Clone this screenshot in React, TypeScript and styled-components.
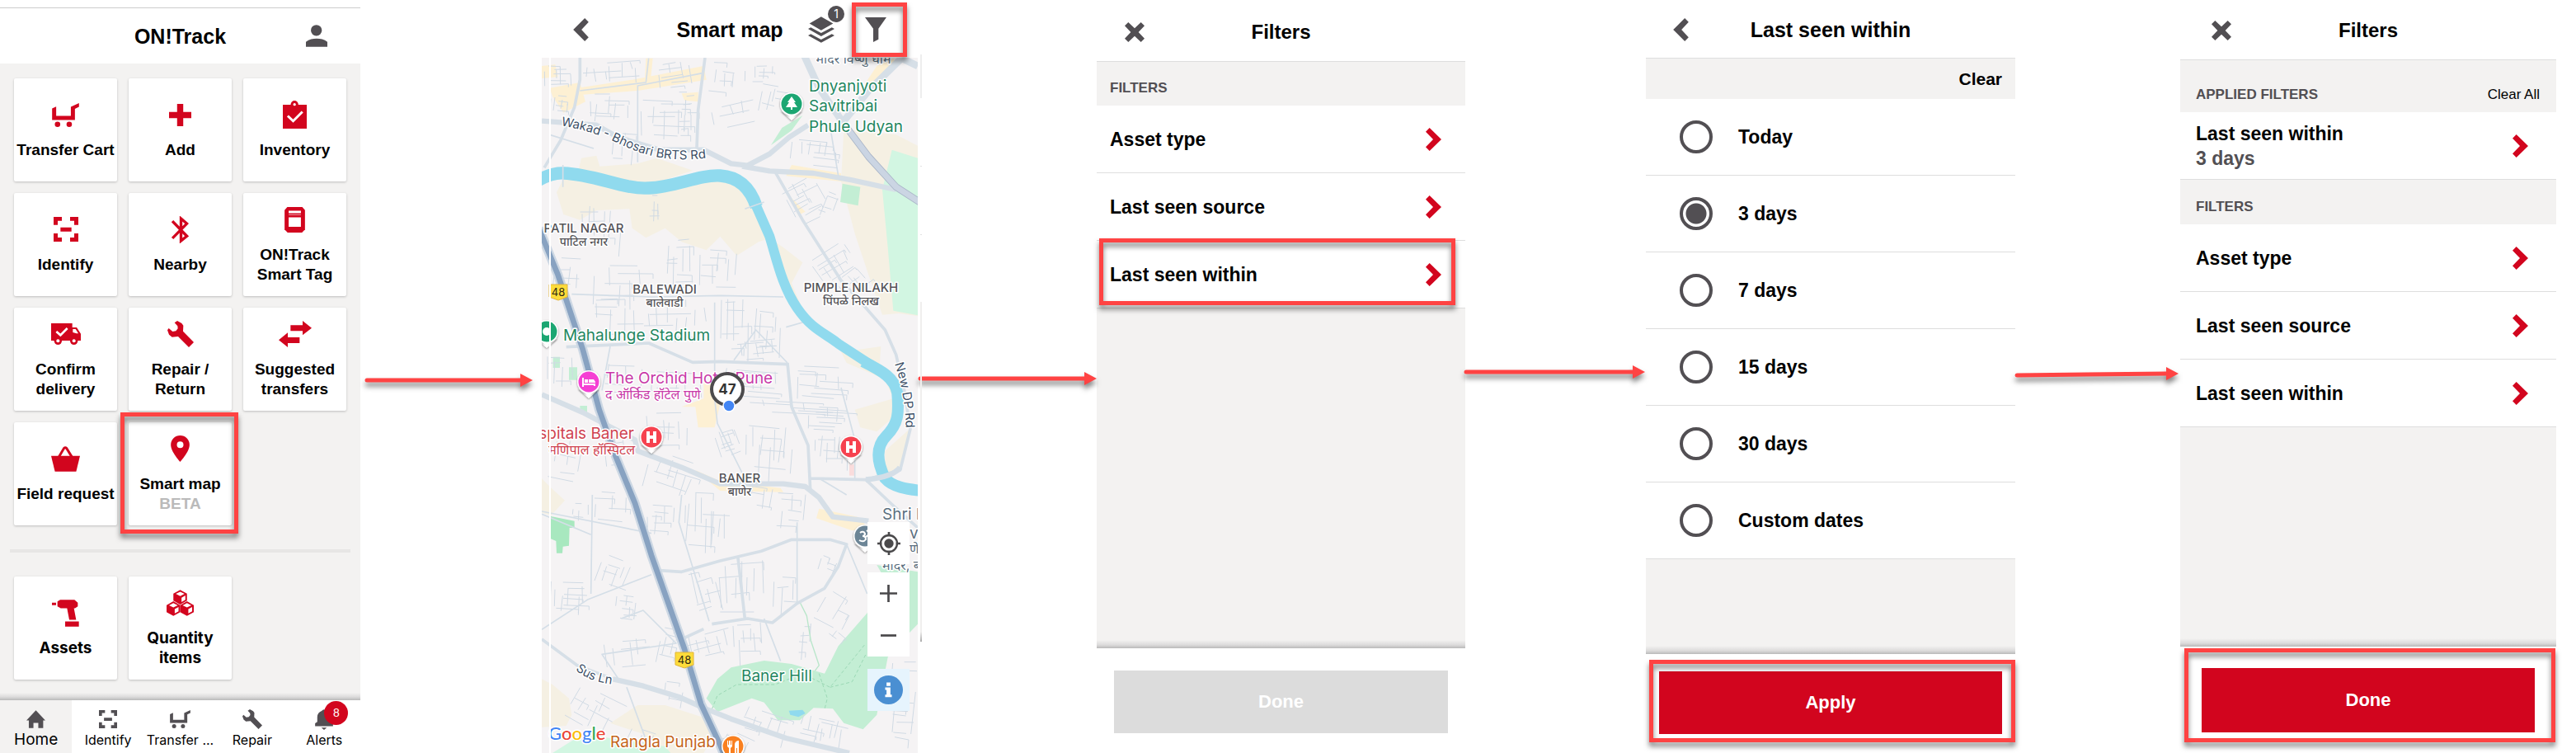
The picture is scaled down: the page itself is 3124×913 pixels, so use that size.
import React from "react";
import styled, { createGlobalStyle } from "styled-components";

const RED = "#d2051e";
const STEEL = "#524f53";
const SAND = "#f3f2f1";
const LINE = "#dedede";
const MARK = "#ff4343";
const UI = '"Liberation Sans", Arial, sans-serif';
const SYSTEM = 'Inter, "Noto Sans", sans-serif';

const GlobalStyle = createGlobalStyle`
  *, *::before, *::after { box-sizing: border-box; }
  body { margin: 0; background: #fff; color: #000; font-family: ${UI}; }
  h2, h3, p, ul, fieldset { margin: 0; padding: 0; border: 0; min-width: 0; }
  button { border: 0; padding: 0; background: none; color: inherit; font: inherit; cursor: pointer; }
  svg { display: block; }
`;

/* ---------- page frame ---------- */

const Flow = styled.main`
  display: grid;
  grid-template-columns:
    minmax(0, 437fr) minmax(0, 220fr) minmax(0, 456fr) minmax(0, 217fr) minmax(0, 447fr)
    minmax(0, 219fr) minmax(0, 448fr) minmax(0, 200fr) minmax(0, 456fr) minmax(0, 24fr);
  min-height: 100vh;
`;

const Screen = styled.section`
  display: flex;
  flex-direction: column;
  min-width: 0;
`;

const Header = styled.header<{ $height: number; $line?: string; $top?: number }>`
  display: grid;
  grid-template-columns: 1fr auto 1fr;
  align-items: center;
  height: ${(p) => p.$height}px;
  padding-top: ${(p) => p.$top ?? 2}px;
  border-bottom: ${(p) => (p.$line ? `1px solid ${p.$line}` : "0")};
`;

const Title = styled.h2<{ $size?: number }>`
  grid-column: 2;
  font-size: ${(p) => p.$size ?? 25}px;
  line-height: 30px;
  font-weight: 700;
`;

const HeaderStart = styled.div<{ $pad: number }>`
  padding-left: ${(p) => p.$pad}px;
  display: flex;
`;

const HeaderEnd = styled.div<{ $pad: number; $gap?: number }>`
  grid-column: 3;
  padding-right: ${(p) => p.$pad}px;
  display: flex;
  align-items: center;
  justify-content: flex-end;
  gap: ${(p) => p.$gap ?? 0}px;
`;

const IconButton = styled.button`
  position: relative;
  display: flex;
  color: ${STEEL};
`;

const Highlight = styled.span<{ $inset: string }>`
  position: absolute;
  inset: ${(p) => p.$inset};
  border: 5px solid ${MARK};
  filter: drop-shadow(0 5px 3px rgba(0, 0, 0, 0.5));
  pointer-events: none;
  z-index: 2;
`;

const Filler = styled.div`
  flex: 1;
  background: linear-gradient(to top, #b9b9b9, #dcdbdb 4px, ${SAND} 10px) ${SAND};
`;

const Footer = styled.footer<{ $pad: string }>`
  display: flex;
  padding: ${(p) => p.$pad};
`;

const ActionButton = styled.button<{ $height?: number }>`
  position: relative;
  flex: 1;
  height: ${(p) => p.$height ?? 76}px;
  background: ${RED};
  color: #fff;
  font-size: 22px;
  line-height: 26px;
  font-weight: 700;
  &:disabled { background: #dcdcdc; color: #fff; cursor: default; }
`;

/* ---------- arrows between screens ---------- */

const Gutter = styled.div<{ $top: number; $sliver?: boolean }>`
  position: relative;
  z-index: 3;
  padding-top: ${(p) => p.$top}px;
  &::after {
    content: "";
    display: ${(p) => (p.$sliver ? "block" : "none")};
    position: absolute;
    left: 3px;
    top: 66px;
    width: 2px;
    height: 712px;
    background: linear-gradient(#eee 53px, #fff 53px, #fff 135px, #e2e2e2 135px, #e2e2e2 136px,
      #fff 136px, #fff 218px, #e2e2e2 218px, #e2e2e2 219px, #fff 219px, #fff 300px, #f0efee 300px,
      #f0efee 700px, #aaa 712px);
  }
`;

const ArrowSvg = styled.svg`
  width: 100%;
  overflow: visible;
  filter: drop-shadow(0 5px 3px rgba(0, 0, 0, 0.5));
`;

function Arrow({ width, from, to, drop = 0 }: { width: number; from: number; to: number; drop?: number }) {
  return (
    <ArrowSvg viewBox={`0 0 ${width} 16`} aria-hidden="true">
      <line x1={from + 3} y1={8 + drop} x2={to - 13} y2={8} stroke={MARK} strokeWidth={5} strokeLinecap="round" />
      <path d={`M${to - 15} 0L${to} 8L${to - 15} 16z`} fill={MARK} />
    </ArrowSvg>
  );
}

/* ---------- icons ---------- */

type IconProps = { scale?: number };

function glyph(w: number, h: number, body: React.ReactNode) {
  return function Glyph({ scale = 1 }: IconProps) {
    return (
      <svg
        viewBox={`0 0 ${w} ${h}`}
        width={Math.round((w / 3) * scale)}
        height={Math.round((h / 3) * scale)}
        fill="currentColor"
        aria-hidden="true"
      >
        {body}
      </svg>
    );
  };
}

const CartIcon = glyph(99, 88, <>
  <path d="M0 20L15 13V47H69V14L99 0V14L84 21V62H0z" />
  <circle cx="20" cy="78" r="10" /><circle cx="63" cy="78" r="10" />
</>);
const PlusIcon = glyph(80, 80, <path d="M29 0H51V29H80V51H51V80H29V51H0V29H29z" />);
const InventoryIcon = glyph(88, 103, <>
  <path d="M0 15H88V103H0z" /><circle cx="43" cy="14" r="14" />
  <circle cx="43" cy="14" r="5" fill="#fff" />
  <path d="M18 56L38 75L72 41" fill="none" stroke="#fff" strokeWidth="9" />
</>);
const ScanIcon = glyph(90, 90, <path d="M0 0H30V14H15V29H0zM60 0H90V29H75V14H60zM0 60H15V75H30V90H0zM75 60H90V90H60V75H75zM25 38H65V53H25z" />);
const BluetoothIcon = glyph(62, 98, <path d="M3 18L55 72L34 89V9L55 27L3 80" fill="none" stroke="currentColor" strokeWidth="10" />);
const TagIcon = glyph(75, 94, <>
  <path d="M10 0H65L75 11V83L64 94H11L0 83V11z" />
  <path d="M15 14H60V23H15zM15 38H60V73H15z" fill="#fff" />
  <path d="M15 27H60V30H15z" fill="#f0a0a8" />
</>);
const TruckIcon = glyph(108, 78, <>
  <path d="M0 0H77V15H93L108 38V63H0z" />
  <circle cx="25" cy="64" r="14" /><circle cx="83" cy="64" r="14" />
  <circle cx="25" cy="64" r="6" fill="#fff" /><circle cx="83" cy="64" r="6" fill="#fff" />
  <path d="M79 21H89L99 37H92L79 33z" fill="#fff" />
  <path d="M19 30L34 43L59 18" fill="none" stroke="#fff" strokeWidth="8" />
</>);
const WrenchIcon = glyph(96, 96, <path d="M26 7L36 0L52 9L58 17L57 38L96 78L78 96L39 57L17 59L6 50L0 34L5 27L19 39L31 37L38 28L37 19z" />);
const SwapIcon = glyph(120, 96, <path d="M43 16H87V0L120 26L87 52V37H43zM76 60H33V43L0 70L33 96V81H76z" />);
const BasketIcon = glyph(106, 92, <>
  <path d="M0 35H106L92 92H14z" />
  <path d="M29 38L47 7Q52 2 57 7L76 38" fill="none" stroke="currentColor" strokeWidth="9" />
</>);
const PinIcon = glyph(68, 96, <path fillRule="evenodd" d="M34 0A34 34 0 0 1 68 34C68 60 34 96 34 96S0 60 0 34A34 34 0 0 1 34 0zM34 22A12 12 0 1 0 34 46A12 12 0 1 0 34 22z" />);
const DrillIcon = glyph(99, 98, <path d="M0 11H15V20H0zM20 6L30 0H82L94 11V24L84 31H80L88 73H63L55 31H32L20 24zM48 79H98V98H48z" />);
const Cube = ({ x, y }: { x: number; y: number }) => (
  <g transform={`translate(${x} ${y})`}>
    <path d="M25 0L50 14V40L25 54L0 40V14z" />
    <path d="M25 7L41 15L25 23L9 15zM30 29L44 21V37L30 45z" fill="#fff" />
  </g>
);
const CubesIcon = glyph(100, 96, <><Cube x={25} y={0} /><Cube x={0} y={42} /><Cube x={50} y={42} /></>);
const PersonIcon = glyph(78, 80, <>
  <circle cx="38" cy="20" r="20" />
  <path d="M0 80V62C12 52 25 50 39 50S66 52 78 62V80z" />
</>);
const HomeIcon = glyph(70, 65, <path d="M35 0L70 37H62V65H44V46H26V65H9V37H0z" />);
const BellIcon = glyph(66, 76, <path d="M0 62V52L8 46V28A25 25 0 0 1 24 6Q33 -4 42 6A25 25 0 0 1 58 28V46L66 52V62zM23 68H43L33 76z" />);
const BackIcon = glyph(56, 84, <path d="M42 0L56 14L30 42L56 70L42 84L0 42z" />);
const NextIcon = glyph(57, 84, <path d="M14 0L57 42L14 84L0 70L27 42L0 14z" />);
const CloseIcon = glyph(72, 72, <path d="M13 0L36 22L59 0L72 13L50 36L72 59L59 72L36 50L13 72L0 59L22 36L0 13z" />);
const LayersIcon = glyph(97, 96, <path d="M48 0L92 25L48 50L5 25zM0 45L10 40L48 60L87 40L97 45L48 72zM0 69L10 64L48 84L87 64L97 69L48 96z" />);
const FunnelIcon = glyph(78, 90, <path d="M0 0H78L49 41V80L30 90V41z" />);
const TargetIcon = glyph(84, 84, <>
  <circle cx="42" cy="42" r="30" fill="none" stroke="currentColor" strokeWidth="7" />
  <circle cx="42" cy="42" r="17" />
  <path d="M38 0H46V16H38zM38 68H46V84H38zM0 38H16V46H0zM68 38H84V46H68z" />
</>);
const ZoomInIcon = glyph(62, 62, <path d="M27 0H35V27H62V35H35V62H27V35H0V27H27z" />);
const ZoomOutIcon = glyph(56, 62, <path d="M0 27H56V35H0z" />);
const InfoIcon = glyph(104, 104, <>
  <circle cx="52" cy="52" r="52" />
  <path d="M45 25H59V38H45zM40 43H59V69H64V78H40V69H45V52H40z" fill="#fff" />
</>);

/* ---------- screen 1: home ---------- */

const HomeScreen = styled(Screen)`
  padding-top: 9px;
`;

const HomeHeader = styled(Header)`
  border-top: 1px solid #ccc;
`;

const HomeBody = styled.div`
  flex: 1;
  padding: 18px 17px 20px;
  background: linear-gradient(to top, #b9b9b9, #dcdbdb 4px, ${SAND} 9px) ${SAND};
`;

const CardGrid = styled.div`
  display: grid;
  grid-template-columns: repeat(3, minmax(0, 1fr));
  gap: 14px;
`;

const Card = styled.button<{ $font?: string }>`
  position: relative;
  display: flex;
  flex-direction: column;
  align-items: center;
  justify-content: center;
  height: 125px;
  background: #fff;
  border-radius: 2px;
  box-shadow: 0 1px 3px rgba(0, 0, 0, 0.22);
  font: 700 19px/24px ${(p) => p.$font ?? UI};
`;

const CardIcon = styled.span`
  display: flex;
  align-items: center;
  height: 36px;
  margin-bottom: 13px;
  color: ${RED};
`;

const CardLine = styled.span<{ $muted?: boolean }>`
  white-space: nowrap;
  color: ${(p) => (p.$muted ? "#bababa" : "#000")};
`;

const Divider = styled.hr`
  height: 4px;
  margin: 29px -5px;
  border: 0;
  background: #e7e6e5;
`;

const TabBar = styled.nav`
  display: grid;
  grid-template-columns: repeat(5, minmax(0, 1fr));
  height: 64px;
`;

const Tab = styled.a<{ $active?: boolean }>`
  display: flex;
  flex-direction: column;
  align-items: center;
  padding-top: 10px;
  background: ${(p) => (p.$active ? SAND : "#fff")};
  color: #000;
  text-decoration: none;
  white-space: nowrap;
  font: 400 ${(p) => (p.$active ? 19 : 16)}px/24px ${SYSTEM};
`;

const TabIcon = styled.span`
  position: relative;
  display: flex;
  align-items: center;
  height: 26px;
  color: ${STEEL};
`;

const AlertBadge = styled.span`
  position: absolute;
  left: 11px;
  top: -9px;
  width: 29px;
  height: 29px;
  border-radius: 50%;
  background: ${RED};
  color: #fff;
  font: 400 14px/29px ${UI};
  text-align: center;
`;

type CardData = { icon: React.ComponentType<IconProps>; lines: string[]; beta?: boolean; marked?: boolean };

const actions: CardData[] = [
  { icon: CartIcon, lines: ["Transfer Cart"] },
  { icon: PlusIcon, lines: ["Add"] },
  { icon: InventoryIcon, lines: ["Inventory"] },
  { icon: ScanIcon, lines: ["Identify"] },
  { icon: BluetoothIcon, lines: ["Nearby"] },
  { icon: TagIcon, lines: ["ON!Track", "Smart Tag"] },
  { icon: TruckIcon, lines: ["Confirm", "delivery"] },
  { icon: WrenchIcon, lines: ["Repair /", "Return"] },
  { icon: SwapIcon, lines: ["Suggested", "transfers"] },
  { icon: BasketIcon, lines: ["Field request"] },
  { icon: PinIcon, lines: ["Smart map"], beta: true, marked: true },
];

const stock: CardData[] = [
  { icon: DrillIcon, lines: ["Assets"] },
  { icon: CubesIcon, lines: ["Quantity", "items"] },
];

function Cards({ items, font }: { items: CardData[]; font?: string }) {
  return (
    <CardGrid>
      {items.map(({ icon: Icon, lines, beta, marked }) => (
        <Card key={lines[0]} type="button" $font={font}>
          <CardIcon><Icon /></CardIcon>
          {lines.map((l) => <CardLine key={l}>{l}</CardLine>)}
          {beta && <CardLine $muted>BETA</CardLine>}
          {marked && <Highlight $inset="-12px -8px -10px -10px" />}
        </Card>
      ))}
    </CardGrid>
  );
}

function Home() {
  return (
    <HomeScreen>
      <HomeHeader $height={68} $top={0}>
        <Title>ON!Track</Title>
        <HeaderEnd $pad={40}><IconButton type="button" aria-label="Profile"><PersonIcon /></IconButton></HeaderEnd>
      </HomeHeader>
      <HomeBody>
        <Cards items={actions} />
        <Divider />
        <Cards items={stock} font={SYSTEM} />
      </HomeBody>
      <TabBar>
        <Tab href="#home" $active><TabIcon><HomeIcon /></TabIcon>Home</Tab>
        <Tab href="#identify"><TabIcon><ScanIcon scale={0.74} /></TabIcon>Identify</Tab>
        <Tab href="#transfer"><TabIcon><CartIcon scale={0.76} /></TabIcon>Transfer ...</Tab>
        <Tab href="#repair"><TabIcon><WrenchIcon scale={0.75} /></TabIcon>Repair</Tab>
        <Tab href="#alerts"><TabIcon><BellIcon /><AlertBadge>8</AlertBadge></TabIcon>Alerts</Tab>
      </TabBar>
    </HomeScreen>
  );
}

/* ---------- screen 2: map ---------- */

const MapArea = styled.div`
  position: relative;
  flex: 1;
  min-height: 0;
  overflow: hidden;
`;

const MapSvg = styled.svg`
  position: absolute;
  inset: 0;
  width: 100%;
  height: 100%;
  text { font-family: ${SYSTEM}; paint-order: stroke; stroke: #fff; stroke-width: 3px; stroke-linejoin: round; }
`;

const MapControls = styled.div`
  position: absolute;
  right: 10px;
  bottom: 51px;
  width: 51px;
  display: flex;
  flex-direction: column;
`;

const MapButton = styled.button<{ $tint?: boolean; $below?: number }>`
  display: flex;
  align-items: center;
  justify-content: center;
  height: 51px;
  margin-bottom: ${(p) => p.$below ?? 0}px;
  background: ${(p) => (p.$tint ? "#e6f4fd" : "#fff")};
  color: ${(p) => (p.$tint ? "#4a8fd2" : "#4a494b")};
`;

const LayerBadge = styled.span`
  position: absolute;
  left: 24px;
  top: -13px;
  width: 20px;
  height: 20px;
  border-radius: 50%;
  background: ${STEEL};
  color: #fff;
  font: 400 14px/20px ${SYSTEM};
  text-align: center;
`;

/* side streets: each block is [x, y, width, height, columns, rows, angle] */
const blocks: number[][] = [
  [60, 230, 110, 90, 4, 5, 0], [200, 220, 220, 80, 7, 3, -4], [470, 225, 150, 100, 4, 5, -8],
  [660, 230, 100, 120, 3, 4, 6], [790, 240, 110, 70, 4, 4, 0], [840, 300, 130, 110, 5, 4, 12],
  [70, 340, 90, 80, 4, 4, 8], [210, 340, 170, 100, 5, 5, 2], [410, 350, 190, 150, 5, 6, 2],
  [550, 330, 70, 180, 2, 9, 0], [310, 480, 100, 110, 5, 3, 4], [650, 370, 190, 110, 3, 3, -12],
  [950, 500, 190, 110, 6, 5, 6], [930, 650, 160, 160, 4, 9, -28], [1060, 680, 70, 120, 2, 4, 20],
  [180, 740, 170, 180, 6, 3, 2], [440, 700, 60, 120, 2, 3, 0], [90, 930, 120, 130, 3, 4, 4],
  [230, 960, 200, 160, 5, 5, 0], [500, 870, 100, 230, 4, 8, 1], [620, 900, 160, 160, 5, 5, 2],
  [1030, 900, 180, 110, 6, 5, -32], [1120, 980, 130, 100, 5, 3, -38], [240, 1080, 180, 150, 4, 5, 0],
  [420, 1090, 240, 150, 7, 4, 0], [700, 1080, 110, 210, 5, 5, 1], [820, 1120, 110, 170, 5, 3, 3],
  [760, 1230, 150, 80, 5, 5, -5], [70, 1280, 100, 120, 4, 3, 0], [220, 1320, 160, 120, 3, 4, 3],
  [400, 1340, 240, 110, 6, 4, 2], [690, 1340, 240, 110, 5, 7, 4], [970, 1330, 200, 130, 3, 8, 4],
  [800, 1460, 380, 50, 3, 5, 3], [1000, 1480, 160, 90, 2, 7, 3], [420, 1500, 170, 130, 6, 4, 0],
  [690, 1560, 90, 110, 4, 6, -20], [790, 1530, 180, 200, 9, 4, 4], [1040, 1580, 160, 130, 7, 3, 3],
  [280, 1560, 90, 140, 3, 4, -8], [430, 1660, 190, 120, 6, 5, 18], [60, 1600, 150, 180, 3, 4, 10],
  [160, 1830, 70, 60, 3, 2, 4], [230, 1780, 140, 130, 3, 4, 5], [430, 1830, 110, 110, 4, 5, 4],
  [560, 1790, 170, 210, 9, 4, 3], [780, 1760, 130, 100, 4, 3, 8], [900, 1780, 120, 170, 3, 5, 5],
  [70, 2110, 150, 120, 6, 6, 2], [240, 2030, 150, 110, 5, 4, 20], [320, 2160, 90, 110, 4, 5, 5],
  [600, 2070, 100, 170, 4, 5, -14], [690, 2030, 190, 210, 7, 4, -2], [890, 2060, 90, 190, 3, 3, 2],
  [1060, 2020, 80, 60, 3, 3, 20], [1060, 2150, 130, 150, 3, 3, 30], [260, 2310, 180, 130, 4, 3, -6],
  [470, 2280, 90, 120, 4, 4, 12], [580, 2300, 160, 100, 5, 4, -14], [740, 2260, 120, 140, 6, 3, -3],
  [150, 2510, 170, 150, 5, 6, 28], [480, 2480, 100, 90, 3, 2, 10], [780, 2590, 190, 100, 6, 5, 18],
  [990, 2600, 170, 110, 7, 4, 12], [1310, 2400, 110, 300, 5, 12, 6], [360, 2640, 120, 80, 3, 2, 20],
  [700, 2660, 150, 70, 3, 3, 24], [1090, 2290, 70, 60, 2, 2, 40], [980, 2260, 60, 150, 2, 4, 4],
];

/* repeatable pseudo-random sequence so that the streets never change between renders */
function sequence(seed: number) {
  let s = seed;
  return () => {
    s = (s * 16807) % 2147483647;
    return s / 2147483647;
  };
}

function streetPath() {
  const rnd = sequence(4711);
  let d = "";
  blocks.forEach(([x, y, w, h, cols, rows, angle]) => {
    const a = (angle * Math.PI) / 180;
    const cx = x + w / 2;
    const cy = y + h / 2;
    const pt = (u: number, v: number) => {
      const px = (u - 0.5) * w;
      const py = (v - 0.5) * h;
      return `${Math.round(cx + px * Math.cos(a) - py * Math.sin(a))} ${Math.round(cy + px * Math.sin(a) + py * Math.cos(a))}`;
    };
    for (let i = 0; i < cols; i++) {
      const u = (i + rnd() * 0.7) / cols;
      const v0 = rnd() * 0.5;
      d += `M${pt(u, v0)}L${pt(u + (rnd() - 0.5) * 0.06, v0 + 0.3 + rnd() * 0.4)}`;
    }
    for (let j = 0; j < rows; j++) {
      const v = (j + rnd() * 0.7) / rows;
      const u0 = rnd() * 0.5;
      const u1 = u0 + 0.3 + rnd() * 0.35;
      d += `M${pt(u0, v)}L${pt(u1, v + (rnd() - 0.5) * 0.05)}`;
      if (rnd() > 0.6) d += `L${pt(u1, v + 0.12)}`;
    }
  });
  return d;
}

const streets = streetPath();

function Terrain() {
  return (
    <g transform="scale(0.333333)" fill="none" strokeLinejoin="round">
      <rect x="0" y="150" width="1500" height="2700" fill="#f5f3f4" />
      <g fill="#f5f0e3">
        <path d="M130 650L440 690L700 640L800 680L900 900L960 1060L870 870L840 880L760 930L700 860L650 910L560 880L500 830L430 865L380 830L370 760L250 765L190 800L130 780L105 700z" />
        <path d="M195 575L250 566L262 605L400 595L470 575L600 620L420 680L180 640z" />
        <path d="M1150 470L1340 490L1419 530V1150L1350 1140L1290 1145L1240 1000L1190 850L1140 660z" />
        <path d="M870 860L930 900L1000 955L960 1030L1010 1150L950 1060z" />
        <path d="M1130 1260L1180 1275L1285 1260L1280 1330L1350 1390V1500L1270 1570L1210 1555L1190 1490L1330 1450L1300 1380L1160 1320z" />
        <path d="M1300 1640L1390 1560L1360 1700L1300 1730z" />
        <path d="M51 1740L80 1770L135 1820L85 1875L51 1865zM51 2470L90 2490L150 2540L160 2600L140 2640L51 2645z" />
        <path d="M300 2630L400 2565H500L640 2610L680 2670L640 2739H430L420 2670z" />
      </g>
      <path fill="#fdf0d3" d="M51 240L100 235L110 280L51 285zM180 320L380 290L640 240L650 290L400 330L190 345zM80 320L190 300L210 370L130 410L90 350zM430 212H455L445 310H425zM560 340L620 335V370L570 365zM1270 240L1330 212L1340 240L1230 350L1210 330zM960 600L1140 630V660L940 640zM640 1390L700 1380V1470L680 1555H620L610 1480L560 1480L640 1450zM610 1710L700 1750L920 1775L930 1790L700 1785zM1060 1850L1200 1880L1240 1920L1180 1930L1050 1885zM960 720L1010 770L990 780z" />
      <path fill="#d2f6e2" d="M1325 545L1419 575V1147L1330 1130L1310 900L1290 690zM200 2670L500 2715L520 2739H90z" />
      <path fill="#c3eed4" d="M1145 668L1210 680L1202 748L1137 735zM1000 420L960 475L885 528L925 465zM92 1298H117V1338H92zM150 1336H180V1382H150zM190 1476H216V1500H190zM650 2540L690 2470L740 2428L860 2403L960 2415L1080 2450L1130 2350L1235 2230L1290 2090L1270 2055L1419 2080V2270L1390 2300L1310 2390L1270 2600L1220 2653L1150 2630L1110 2578L1040 2575L990 2620H910L860 2555L815 2540L690 2590z" />
      <path fill="#a8e8bf" d="M84 1878L170 1895V1920H152L150 1985L128 1988L126 2012H105L103 1968L84 1960z" />
      <path fill="#fadcdc" d="M1170 1690H1190V1730H1170z" />
      <path d={streets} stroke="#d0dae4" strokeWidth="3" />
      <path stroke="#9bd8b5" strokeWidth="3" strokeDasharray="12 8" d="M670 2580L690 2530L760 2490L900 2490L1000 2450L1100 2500L1230 2340M1100 2500L1180 2480L1230 2380M1060 2450L1090 2540L1080 2580" />
      <path stroke="#b9e6ca" strokeWidth="4" d="M990 2190L1015 2240L1030 2330L1060 2420L1045 2440" />
      <path stroke="#d4dee7" strokeWidth="5" d="M80 490L240 540M440 212L430 300L190 330M640 265L400 312V590M1100 460L1130 640M160 1070L450 1080L700 1075L930 1080M680 1100V1450L690 1540L780 1720M300 1260L270 1420M945 1320L830 1200L750 1310M940 1190L1010 1170M1140 1410L1190 1600V1740M51 1860L450 1940M51 2290L220 2180L450 2090M235 1800L230 2160M560 1800L550 1900L660 2260M340 2250L420 2220L540 2340L270 2380L330 2470M980 1900V2190M1160 1980L1235 2160M51 1870L230 1945M860 2250L920 2405M360 2500L430 2690M1160 1800L1060 1740" />
      <g stroke="#d6dfe7" strokeWidth="11">
        <path d="M190 210V290L170 390L120 510L60 610M645 210L620 400L615 540M900 625L1000 800L1140 1020L1230 1120L1300 1200L1340 1290L1370 1420L1392 1560L1355 1710L1230 1745L1030 1740M945 1320L960 1480L1020 1620L1028 1780" />
        <path d="M140 1262L440 1248L600 1318L700 1315L945 1325M480 2075L560 2080L700 2040L850 2005L960 1963H1100L1160 1980L1130 2060L1080 2140L980 2195L890 2265L800 2250L670 2270M51 2325L180 2420L310 2470M765 2030L790 2250M1230 1745L1320 1830L1419 1920M560 2325L640 2288" />
        <path strokeWidth="19" d="M51 440L250 455L330 500L480 545H640L740 595L800 602L880 560L950 500L1020 455M780 605L880 622L1040 630L1180 655L1340 690M51 1435L200 1500L390 1600L400 1640L560 1700L700 1760H930L1010 1770L1060 1810L1110 1880L1240 1895M310 2470L420 2495L550 2535L640 2575L740 2615L940 2685L1170 2739" />
        <path strokeWidth="26" d="M1005 200L1060 320L1150 450M1360 212L1240 330L1150 440M1360 212L1419 240" />
      </g>
      <path stroke="#aab6c8" strokeWidth="26" d="M1150 450L1240 570L1340 680L1430 738" />
      <path stroke="#cbd5e3" strokeWidth="21" d="M1150 450L1240 570L1340 680L1430 738" />
      <g stroke="#90daee">
        <path strokeWidth="46" d="M40 655Q90 628 130 630C250 635 350 690 440 684C540 680 620 635 700 639C780 644 815 700 832 752" />
        <path strokeWidth="36" d="M825 735L880 860C905 940 925 1040 980 1120S1080 1210 1130 1250L1260 1335" />
        <path strokeWidth="42" d="M1220 1315C1290 1350 1335 1375 1345 1430C1350 1500 1350 1540 1305 1585C1260 1630 1275 1690 1300 1740C1330 1775 1390 1780 1430 1785" />
      </g>
      <path fill="#90daee" d="M950 2585L1000 2582L1010 2595L985 2608L955 2600z" />
      <path stroke="#d4dee7" strokeWidth="5" d="M128 600V680M790 760L860 735" />
      <path stroke="#d4dee7" strokeWidth="20" d="M1355 1700Q1330 1735 1230 1745" />
      <path stroke="#ccd7e3" strokeWidth="34" d="M40 830L110 1000L200 1270L260 1490L320 1660L390 1830L450 2020L570 2360L630 2560L700 2710L720 2760" />
      <path stroke="#88a2c1" strokeWidth="20" d="M40 830L110 1000L200 1270L260 1490L320 1660L390 1830L450 2020L570 2360L630 2560L700 2710L720 2760" />
    </g>
  );
}

function MapPin({ x, y, color, children }: { x: number; y: number; color: string; children?: React.ReactNode }) {
  return (
    <g transform={`translate(${x} ${y})`}>
      <path d="M-13 8L0 20L13 8z" fill="#fff" filter="url(#pinShadow)" />
      <circle r="14" fill="#fff" filter="url(#pinShadow)" />
      <path d="M-12 7L0 18L12 7z" fill="#fff" />
      <circle r="12.5" fill={color} />
      {children}
    </g>
  );
}

function Shield({ x, y }: { x: number; y: number }) {
  return (
    <g transform={`translate(${x} ${y})`}>
      <path d="M-11 -9H11V6L0 10L-11 6z" fill="#fddc3a" stroke="#e0b43a" strokeWidth="1" strokeLinejoin="round" />
      <text y="5" fontSize="13" textAnchor="middle" fill="#2d2a12" style={{ stroke: "none" }}>48</text>
    </g>
  );
}

const Place = ({ x, y, en, hi }: { x: number; y: number; en: string; hi: string }) => (
  <g fill="#545357" textAnchor="middle" fontWeight="500">
    <text x={x} y={y} fontSize="15">{en}</text>
    <text x={x} y={y + 16} fontSize="14">{hi}</text>
  </g>
);

const googleLetters: [string, string][] = [
  ["G", "#4285f4"], ["o", "#ea4335"], ["o", "#fbbc05"], ["g", "#4285f4"], ["l", "#34a853"], ["e", "#ea4335"],
];

function CityMap() {
  return (
    <MapSvg viewBox="17 70 456 843" preserveAspectRatio="xMidYMin slice" role="img" aria-label="Map of Baner and Balewadi">
      <defs>
        <filter id="pinShadow" x="-50%" y="-50%" width="200%" height="200%">
          <feDropShadow dx="0" dy="1" stdDeviation="1" floodOpacity="0.45" />
        </filter>
        <path id="wakad" d="M40 152C65 157 85 162 108 173C140 188 170 200 235 189" />
        <path id="dpRoad" d="M445 441C453 465 459 490 459 535" />
        <path id="susLane" d="M58 812Q75 829 118 831" />
      </defs>
      <Terrain />
      <g fontSize="15" fill="#3d4f66">
        <text><textPath href="#wakad">Wakad - Bhosari BRTS Rd</textPath></text>
        <text><textPath href="#dpRoad">New DP Rd</textPath></text>
        <text><textPath href="#susLane">Sus Ln</textPath></text>
      </g>
      <g fontSize="19" fill="#23865f">
        <text x="341" y="111">Dnyanjyoti</text>
        <text x="341" y="135">Savitribai</text>
        <text x="341" y="160">Phule Udyan</text>
        <text x="43" y="413">Mahalunge Stadium</text>
        <text x="259" y="826">Baner Hill</text>
      </g>
      <g fill="#5b6f80">
        <text x="395" y="77" fontSize="16" textAnchor="middle">मंदिर विष्णु धाम</text>
        <text x="430" y="630" fontSize="19">Shri H</text>
        <text x="463" y="653" fontSize="19">vs</text>
        <text x="463" y="671" fontSize="16">णे</text>
        <text x="430" y="691" fontSize="16">मंदिर, बा</text>
      </g>
      <Place x={68} y={282} en="PATIL NAGAR" hi="पाटिल नगर" />
      <Place x={166} y={356} en="BALEWADI" hi="बालेवाडी" />
      <Place x={392} y={354} en="PIMPLE NILAKH" hi="पिंपळे निलख" />
      <Place x={257} y={585} en="BANER" hi="बाणेर" />
      <g fill="#c83aa8">
        <text x="94" y="465" fontSize="19">The Orchid Hotel Pune</text>
        <text x="94" y="484" fontSize="16">द ऑर्किड हॉटेल पुणे</text>
      </g>
      <g fill="#cf4350" textAnchor="end">
        <text x="129" y="532" fontSize="19">spitals Baner</text>
        <text x="130" y="551" fontSize="16">मणिपाल हॉस्पिटल</text>
      </g>
      <text x="100" y="906" fontSize="19" fill="#c5651b">Rangla Punjab</text>
      <text x="25" y="897" fontSize="22" fontWeight="500" style={{ fontFamily: "Lato, sans-serif" }}>
        {googleLetters.map(([letter, color], i) => <tspan key={i} fill={color}>{letter}</tspan>)}
      </text>

      <Shield x={37} y={354} />
      <Shield x={190} y={800} />
      <MapPin x={320} y={126} color="#1ba672">
        <path d="M0 -9L5 -2H3L7 4H1V7H-1V4H-7L-3 -2H-5z" fill="#fff" />
      </MapPin>
      <MapPin x={23} y={402} color="#1ba672"><circle r="5" fill="#fff" /></MapPin>
      <MapPin x={74} y={463} color="#f53fd3">
        <path d="M-8 -5H-6V2H8V5H6V4H-6V6H-8zM-5 -3H-1V1H-5zM0 -3H6L8 0V1H0z" fill="#fff" />
      </MapPin>
      {[[150, 530], [392, 542]].map(([x, y]) => (
        <MapPin key={x} x={x} y={y} color="#f6424f">
          <path d="M-6 -7H-2V-2H2V-7H6V7H2V2H-2V7H-6z" fill="#fff" />
        </MapPin>
      ))}
      <MapPin x={409} y={650} color="#6c8596">
        <path d="M-6 -4Q-2 -7 0 -3Q0 0 -3 0Q1 0 1 4Q-2 8 -7 5M1 1Q6 -4 8 1Q8 5 5 4M2 -7Q5 -4 8 -7" fill="none" stroke="#fff" strokeWidth="2" />
      </MapPin>
      <MapPin x={249} y={905} color="#f98020">
        <path d="M-7 -7H-6V-2H-5V-7H-3V-2H-2V-7H-1V0L-3 2V8H-5V2L-7 0zM2 8V-3Q3 -7 7 -7V8H5V2H4V8z" fill="#fff" />
      </MapPin>

      <circle cx="242" cy="472" r="19" fill="#fff" stroke="#4c4b4d" strokeWidth="4" />
      <text x="242" y="478" fontSize="17" fontWeight="700" textAnchor="middle" fill="#333">47</text>
      <circle cx="244" cy="492" r="7" fill="#4285f4" stroke="#fff" strokeWidth="1.5" />
      <rect x="26" y="66" width="2" height="850" fill="#fff" />
    </MapSvg>
  );
}

function SmartMap() {
  return (
    <Screen>
      <Header $height={70}>
        <HeaderStart $pad={38}><IconButton type="button" aria-label="Back"><BackIcon /></IconButton></HeaderStart>
        <Title>Smart map</Title>
        <HeaderEnd $pad={38} $gap={37}>
          <IconButton type="button" aria-label="Map layers"><LayersIcon /><LayerBadge>1</LayerBadge></IconButton>
          <IconButton type="button" aria-label="Filter">
            <FunnelIcon />
            <Highlight $inset="-18px -25px -18px -16px" />
          </IconButton>
        </HeaderEnd>
      </Header>
      <MapArea>
        <CityMap />
        <MapControls>
          <MapButton type="button" aria-label="My location" $below={10}><TargetIcon /></MapButton>
          <MapButton type="button" aria-label="Zoom in"><ZoomInIcon /></MapButton>
          <MapButton type="button" aria-label="Zoom out" $below={15}><ZoomOutIcon /></MapButton>
          <MapButton type="button" aria-label="Information" $tint><InfoIcon /></MapButton>
        </MapControls>
      </MapArea>
    </Screen>
  );
}

/* ---------- screens 3 and 5: filters ---------- */

const SectionBar = styled.div<{ $height: number; $pad: number }>`
  display: flex;
  align-items: flex-end;
  justify-content: space-between;
  height: ${(p) => p.$height}px;
  padding: 0 20px 11px ${(p) => p.$pad}px;
  background: ${SAND};
  font-size: 17px;
  line-height: 20px;
`;

const SectionTitle = styled.h3`
  font-size: 17px;
  line-height: 20px;
  font-weight: 700;
  color: ${STEEL};
`;

const FilterRow = styled.button<{ $start: number; $end: number }>`
  position: relative;
  display: flex;
  align-items: center;
  justify-content: space-between;
  width: 100%;
  height: 82px;
  padding: 0 ${(p) => p.$end}px 0 ${(p) => p.$start}px;
  border-bottom: 1px solid ${LINE};
  text-align: left;
  font-size: 23px;
  line-height: 30px;
  font-weight: 700;
`;

const RowText = styled.span`
  display: flex;
  flex-direction: column;
`;

const RowValue = styled.span`
  color: ${STEEL};
`;

const RowArrow = styled.span`
  color: ${RED};
`;

const filterNames = ["Asset type", "Last seen source", "Last seen within"];

function Row({ name, value, start, end, mark }: { name: string; value?: string; start: number; end: number; mark?: string }) {
  return (
    <FilterRow type="button" $start={start} $end={end}>
      <RowText>{name}{value && <RowValue>{value}</RowValue>}</RowText>
      <RowArrow><NextIcon /></RowArrow>
      {mark && <Highlight $inset={mark} />}
    </FilterRow>
  );
}

function FilterList() {
  return (
    <Screen>
      <Header $height={75} $line={LINE} $top={4}>
        <HeaderStart $pad={34}><IconButton type="button" aria-label="Close"><CloseIcon /></IconButton></HeaderStart>
        <Title $size={24}>Filters</Title>
      </Header>
      <SectionBar $height={53} $pad={16}><SectionTitle>FILTERS</SectionTitle></SectionBar>
      {filterNames.map((name, i) => (
        <Row key={name} name={name} start={16} end={29} mark={i === 2 ? "-3px 12px 3px 3px" : undefined} />
      ))}
      <Filler />
      <Footer $pad="27px 21px 24px"><ActionButton type="button" disabled>Done</ActionButton></Footer>
    </Screen>
  );
}

function AppliedFilters() {
  return (
    <Screen>
      <Header $height={73} $line={LINE} $top={2}>
        <HeaderStart $pad={38}><IconButton type="button" aria-label="Close"><CloseIcon /></IconButton></HeaderStart>
        <Title $size={24}>Filters</Title>
      </Header>
      <SectionBar $height={63} $pad={19}>
        <SectionTitle>APPLIED FILTERS</SectionTitle>
        <button type="button">Clear All</button>
      </SectionBar>
      <Row name="Last seen within" value="3 days" start={19} end={34} />
      <SectionBar $height={54} $pad={19}><SectionTitle>FILTERS</SectionTitle></SectionBar>
      {filterNames.map((name) => <Row key={name} name={name} start={19} end={34} />)}
      <Filler />
      <Footer $pad="26px 26px 25px">
        <ActionButton type="button" $height={78}>Done<Highlight $inset="-24px -25px -12px -21px" /></ActionButton>
      </Footer>
    </Screen>
  );
}

/* ---------- screen 4: last seen within ---------- */

const ClearBar = styled.div`
  display: flex;
  align-items: center;
  justify-content: flex-end;
  height: 49px;
  padding-right: 16px;
  background: ${SAND};
`;

const ClearButton = styled.button`
  font-size: 21px;
  line-height: 24px;
  font-weight: 700;
`;

const Option = styled.label`
  display: flex;
  align-items: center;
  gap: 31px;
  height: 93px;
  padding-left: 41px;
  border-bottom: 1px solid ${LINE};
  font-size: 23px;
  line-height: 30px;
  font-weight: 700;
`;

const Radio = styled.input`
  appearance: none;
  width: 40px;
  height: 40px;
  margin: 0;
  border: 4px solid ${STEEL};
  border-radius: 50%;
  &:checked { background: radial-gradient(circle, ${STEEL} 12px, #fff 13px); }
`;

const periods = ["Today", "3 days", "7 days", "15 days", "30 days", "Custom dates"];

function LastSeen() {
  return (
    <Screen>
      <Header $height={71} $line={LINE}>
        <HeaderStart $pad={33}><IconButton type="button" aria-label="Back"><BackIcon /></IconButton></HeaderStart>
        <Title>Last seen within</Title>
      </Header>
      <ClearBar><ClearButton type="button">Clear</ClearButton></ClearBar>
      <fieldset aria-label="Last seen within">
        {periods.map((p) => (
          <Option key={p}>
            <Radio type="radio" name="period" value={p} defaultChecked={p === "3 days"} />
            {p}
          </Option>
        ))}
      </fieldset>
      <Filler />
      <Footer $pad="21px 16px 23px">
        <ActionButton type="button">Apply<Highlight $inset="-14px -16px -10px -12px" /></ActionButton>
      </Footer>
    </Screen>
  );
}

export default function App() {
  return (
    <>
      <GlobalStyle />
      <Flow>
        <Home />
        <Gutter $top={453}><Arrow width={220} from={5} to={209} /></Gutter>
        <SmartMap />
        <Gutter $top={451} $sliver><Arrow width={217} from={0} to={217} /></Gutter>
        <FilterList />
        <Gutter $top={443}><Arrow width={219} from={-2} to={218} /></Gutter>
        <LastSeen />
        <Gutter $top={445}><Arrow width={200} from={-1} to={198} drop={2} /></Gutter>
        <AppliedFilters />
      </Flow>
    </>
  );
}
